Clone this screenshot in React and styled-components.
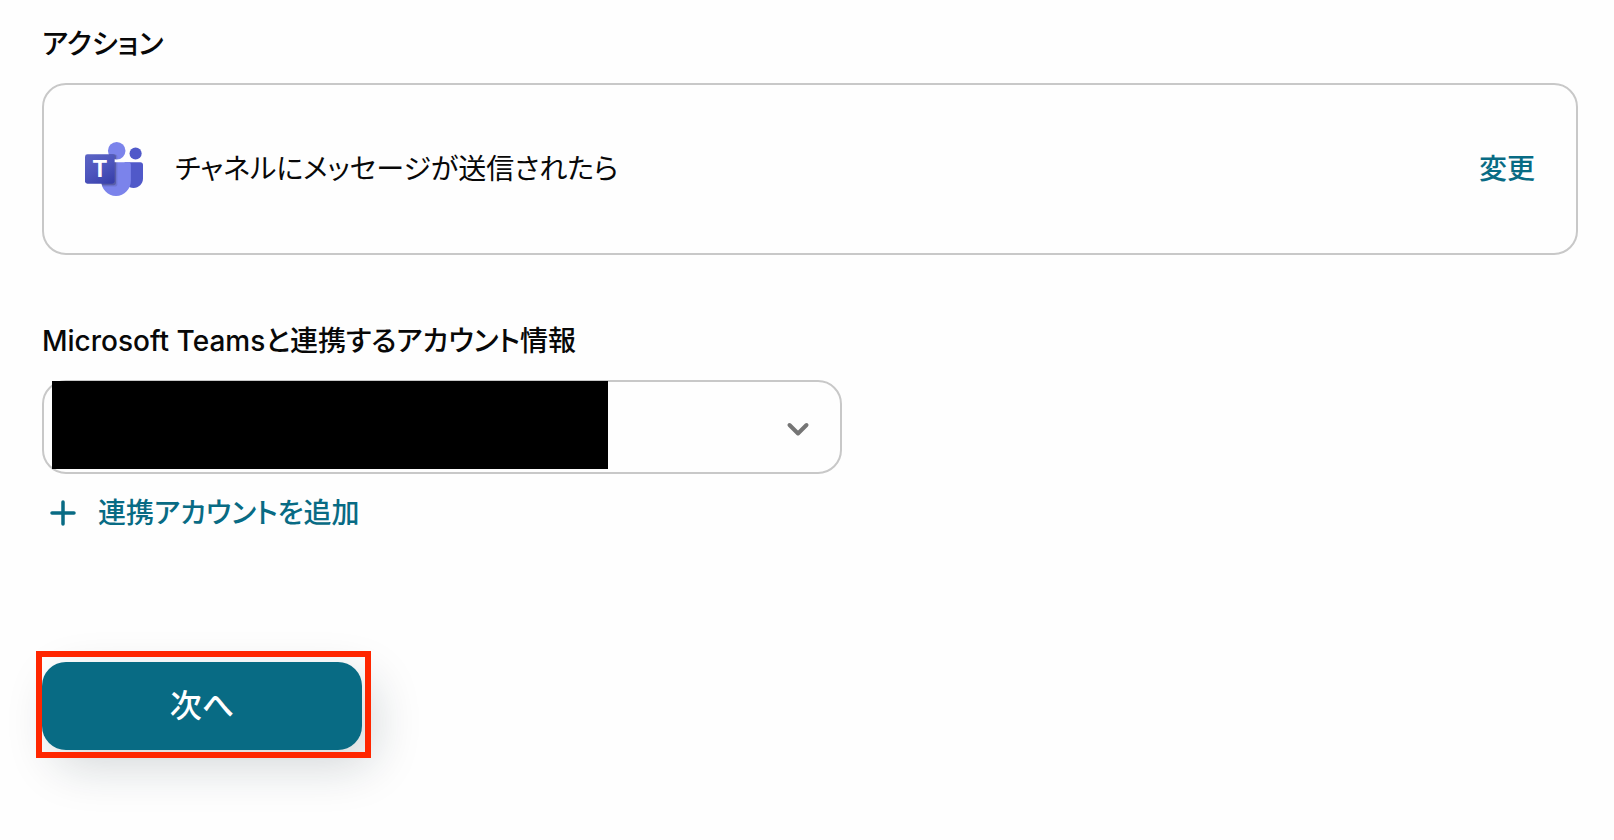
import { useId } from "react";
import styled, { createGlobalStyle } from "styled-components";

const GlobalStyle = createGlobalStyle`
  *,
  *::before,
  *::after {
    box-sizing: border-box;
  }

  body {
    margin: 0;
    background: #fefefe;
    color: #080808;
    font-family: Inter, "Noto Sans CJK JP", sans-serif;
    font-size: 28px;
    line-height: 40px;
    font-feature-settings: "palt";
  }
`;

const Page = styled.main`
  min-height: 100vh;
  padding: 24px 36px 24px 42px;
`;

const Section = styled.section`
  display: flex;
  flex-direction: column;
  gap: 19px;
  margin-bottom: ${({ $space }) => $space || 0}px;
`;

const Title = styled.h2`
  margin: 0;
  font-size: 28px;
  font-weight: 500;
`;

const Label = styled.label`
  font-weight: 500;
`;

const ActionCard = styled.div`
  display: flex;
  align-items: center;
  gap: 32px;
  padding: 57px 41px;
  border: 2px solid #c8c8c8;
  border-radius: 24px;
`;

const ActionName = styled.span`
  flex: 1;
`;

const TextButton = styled.button`
  display: inline-flex;
  align-items: center;
  gap: 21px;
  padding: 0;
  border: 0;
  background: none;
  color: #086b84;
  font: inherit;
  font-feature-settings: inherit;
  font-weight: 500;
  cursor: pointer;
`;

const AddButton = styled(TextButton)`
  align-self: flex-start;
  padding-left: 7px;
`;

const SelectBox = styled.div`
  position: relative;
  max-width: 800px;
`;

const Select = styled.select`
  display: block;
  width: 100%;
  height: 94px;
  padding: 0 80px 0 32px;
  border: 2px solid #c8c8c8;
  border-radius: 24px;
  background: #fefefe;
  font: inherit;
  appearance: none;
`;

const Redaction = styled.div`
  position: absolute;
  top: 1px;
  left: 10px;
  width: 556px;
  height: 88px;
  background: #000;
`;

const Chevron = styled.svg`
  position: absolute;
  top: 32px;
  right: 28px;
  pointer-events: none;
`;

const Highlight = styled.div`
  position: relative;
  width: fit-content;

  &::after {
    content: "";
    position: absolute;
    inset: -11px -9px -8px -6px;
    border: 6px solid #ff2600;
    pointer-events: none;
  }
`;

const NextButton = styled.button`
  display: block;
  width: 320px;
  height: 88px;
  border: 0;
  border-radius: 24px;
  background: #086b84;
  box-shadow: 12px 16px 48px rgba(16, 40, 52, 0.18);
  color: #fff;
  font: inherit;
  font-feature-settings: inherit;
  font-size: 32px;
  font-weight: 500;
  cursor: pointer;
`;

const TeamsLogo = () => (
  <svg width="58" height="54" viewBox="0 0 2228.833 2073.333" aria-hidden="true">
    <defs>
      <linearGradient id="tile" x1="0.2" y1="0" x2="0.8" y2="1">
        <stop offset="0" stopColor="#5a62c3" />
        <stop offset="0.5" stopColor="#4d55bd" />
        <stop offset="1" stopColor="#3940ab" />
      </linearGradient>
      <clipPath id="person">
        <circle cx="1218" cy="337" r="337" />
        <path d="M1667 777.5H717c-54 1-96 46-95 100v598c-8 322 248 590 570 598 323-8 578-276 570-598V877c2-54-41-98-95-99.5z" />
      </clipPath>
    </defs>
    <path
      fill="#5059c9"
      d="M1554.637 777.5h575.713c54.391 0 98.483 44.092 98.483 98.483v524.398c0 199.901-162.051 361.952-361.952 361.952h-1.711c-199.901.028-361.975-162-362.004-361.901V828.971c.001-28.427 23.045-51.471 51.471-51.471z"
    />
    <circle fill="#5059c9" cx="1943.75" cy="440.583" r="233.25" />
    <circle fill="#7b83eb" cx="1218.083" cy="336.917" r="336.917" />
    <path
      fill="#7b83eb"
      d="M1667.323 777.5H717.01c-53.743 1.33-96.257 45.931-95.01 99.676v598.105c-7.505 322.519 247.657 590.16 570.167 598.053 322.51-7.893 577.671-275.534 570.167-598.053V877.176c1.245-53.745-41.268-98.346-95.011-99.676z"
    />
    <g clipPath="url(#person)" fill="#000">
      <rect opacity="0.1" x="0" y="466" width="1244" height="1244" rx="100" />
      <rect opacity="0.2" x="0" y="466" width="1192" height="1192" rx="100" />
    </g>
    <rect fill="url(#tile)" y="466.5" width="1140" height="1140" rx="95" />
    <text
      x="570"
      y="1345"
      fill="#fff"
      fontFamily="Liberation Sans, sans-serif"
      fontSize="897"
      fontWeight="700"
      textAnchor="middle"
    >
      T
    </text>
  </svg>
);

const PlusIcon = () => (
  <svg width="28" height="28" viewBox="0 0 28 28" aria-hidden="true">
    <path
      d="M14 3v22M3 14h22"
      fill="none"
      stroke="#086b84"
      strokeWidth="3.5"
      strokeLinecap="round"
    />
  </svg>
);

const App = () => {
  const accountId = useId();

  return (
    <>
      <GlobalStyle />
      <Page>
        <Section $space={66}>
          <Title>アクション</Title>
          <ActionCard>
            <TeamsLogo />
            <ActionName>チャネルにメッセージが送信されたら</ActionName>
            <TextButton type="button">変更</TextButton>
          </ActionCard>
        </Section>
        <Section $space={129}>
          <Label htmlFor={accountId}>
            Microsoft Teamsと連携するアカウント情報
          </Label>
          <SelectBox>
            <Select id={accountId} />
            <Redaction />
            <Chevron width="32" height="32" viewBox="0 0 32 32" aria-hidden="true">
              <path
                d="M7.5 13l8.5 8.5 8.5-8.5"
                fill="none"
                stroke="#757575"
                strokeWidth="4"
                strokeLinecap="round"
                strokeLinejoin="round"
              />
            </Chevron>
          </SelectBox>
          <AddButton type="button">
            <PlusIcon />
            連携アカウントを追加
          </AddButton>
        </Section>
        <Highlight>
          <NextButton type="button">次へ</NextButton>
        </Highlight>
      </Page>
    </>
  );
};

export default App;
